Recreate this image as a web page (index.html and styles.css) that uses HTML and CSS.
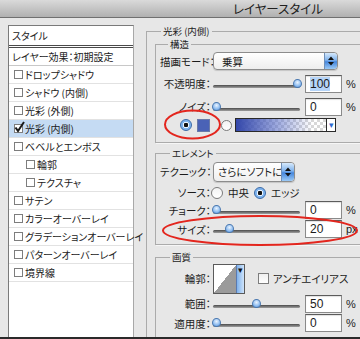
FILE: index.html
```html
<!DOCTYPE html>
<html lang="ja">
<head>
    <meta charset="UTF-8">
    <meta name="viewport" content="width=device-width, initial-scale=1.0">
    <title>レイヤースタイル</title>
    <link rel="stylesheet" href="styles.css">
</head>
<body>
<div class="window">
    <div class="title-bar">レイヤースタイル</div>

    <div class="main">
        <!-- Liste des styles -->
        <ul class="style-list">
            <li class="list-head">スタイル</li>
            <li class="list-default">レイヤー効果：初期設定</li>
            <li class="effect"><span class="check"></span>ドロップシャドウ</li>
            <li class="effect"><span class="check"></span>シャドウ (内側)</li>
            <li class="effect"><span class="check"></span>光彩 (外側)</li>
            <li class="effect selected">
                <span class="check">
                    <svg class="tick" width="11" height="12" viewBox="0 0 11 12"><path d="M1.5 6.5 L4 10 L10 1" fill="none" stroke="#1a1a1a" stroke-width="2"/></svg>
                </span>光彩 (内側)
            </li>
            <li class="effect"><span class="check"></span>ベベルとエンボス</li>
            <li class="effect sub"><span class="check"></span>輪郭</li>
            <li class="effect sub"><span class="check"></span>テクスチャ</li>
            <li class="effect"><span class="check"></span>サテン</li>
            <li class="effect"><span class="check"></span>カラーオーバーレイ</li>
            <li class="effect"><span class="check"></span>グラデーションオーバーレイ</li>
            <li class="effect"><span class="check"></span>パターンオーバーレイ</li>
            <li class="effect"><span class="check"></span>境界線</li>
        </ul>

        <!-- Réglages du style -->
        <section class="panel">
            <div class="group-title">光彩 (内側)</div>

            <div class="group group-structure">
                <div class="group-title">構造</div>
                <div class="field h22">
                    <span class="field-label">描画モード：</span>
                    <div class="select select-blend"><span>乗算</span><span class="stepper"><svg width="12" height="16" viewBox="0 0 12 16"><path d="M3 7 L6 3.5 L9 7Z M3 9 L6 12.5 L9 9Z" fill="#111"/></svg></span></div>
                </div>
                <div class="field h23">
                    <span class="field-label">不透明度：</span>
                    <div class="slider"><span class="thumb" style="left: 80px"></span></div>
                    <div class="num"><span class="num-selected">100</span></div>
                    <span class="unit">%</span>
                </div>
                <div class="field h23">
                    <span class="field-label">ノイズ：</span>
                    <div class="slider"><span class="thumb" style="left: -1px"></span></div>
                    <div class="num">0</div>
                    <span class="unit">%</span>
                </div>
                <div class="field h14">
                    <span class="radio on color-radio"></span>
                    <span class="swatch"></span>
                    <span class="radio off gradient-radio"></span>
                    <span class="gradient"></span>
                    <span class="gradient-btn">▾</span>
                </div>
            </div>

            <div class="group group-element">
                <div class="group-title">エレメント</div>
                <div class="field h25">
                    <span class="field-label">テクニック：</span>
                    <div class="select select-technique"><span class="select-text">さらにソフトに</span><span class="stepper"><svg width="12" height="18" viewBox="0 0 12 18"><path d="M3 8 L6 4.5 L9 8Z M3 10 L6 13.5 L9 10Z" fill="#111"/></svg></span></div>
                </div>
                <div class="field h17">
                    <span class="field-label">ソース：</span>
                    <span class="radio off"></span>
                    <span class="radio-text">中央</span>
                    <span class="radio on source-edge"></span>
                    <span class="radio-text">エッジ</span>
                </div>
                <div class="field h18">
                    <span class="field-label">チョーク：</span>
                    <div class="slider"><span class="thumb" style="left: -1px"></span></div>
                    <div class="num">0</div>
                    <span class="unit">%</span>
                </div>
                <div class="field h20">
                    <span class="field-label">サイズ：</span>
                    <div class="slider"><span class="thumb" style="left: 12px"></span></div>
                    <div class="num">20</div>
                    <span class="unit">px</span>
                </div>
            </div>

            <div class="group group-quality">
                <div class="group-title">画質</div>
                <div class="field h31">
                    <span class="field-label">輪郭：</span>
                    <div class="contour"><span class="contour-curve"></span><span class="contour-btn">▾</span></div>
                    <span class="box"></span>
                    <span class="box-text">アンチエイリアス</span>
                </div>
                <div class="field h19">
                    <span class="field-label">範囲：</span>
                    <div class="slider"><span class="thumb" style="left: 39px"></span></div>
                    <div class="num">50</div>
                    <span class="unit">%</span>
                </div>
                <div class="field h20">
                    <span class="field-label">適用度：</span>
                    <div class="slider"><span class="thumb" style="left: -1px"></span></div>
                    <div class="num">0</div>
                    <span class="unit">%</span>
                </div>
            </div>
        </section>
    </div>

    <!-- Annotations rouges -->
    <svg class="marks" width="360" height="339" viewBox="0 0 360 339">
        <ellipse cx="192.5" cy="124.5" rx="27.5" ry="14" fill="none" stroke="#e3261e" stroke-width="2"/>
        <ellipse cx="260" cy="230.5" rx="97" ry="14.5" fill="none" stroke="#e3261e" stroke-width="2"/>
    </svg>
</div>
</body>
</html>
```

FILE: styles.css
```css
/* Styles généraux */
* {
    box-sizing: border-box;
}
body {
    margin: 0;
    font-family: "Noto Sans CJK JP", sans-serif;
    font-size: 10.5px;
    color: #1b1b1b;
    font-feature-settings: "palt";
}
.window {
    position: relative;
    width: 360px;
    height: 339px;
    overflow: hidden;
    background-color: #e7e7e7;
    border-bottom: 2px solid #2a2a2a;
}
.title-bar {
    height: 18px;
    padding-left: 233px;
    border-bottom: 1px solid #707070;
    background: linear-gradient(#dadada, #b0b0b0);
    font-size: 12.5px;
    line-height: 17px;
    color: #202020;
}
.main {
    display: flex;
    align-items: flex-start;
    padding: 7px 0 0 8px;
}

/* Liste des styles */
.style-list {
    flex: none;
    width: 126px;
    height: 330px;
    margin: 0;
    padding: 0;
    list-style: none;
    background-color: #fff;
    border: 1px solid #7a7a7a;
    border-right-color: #a8a8a8;
    font-size: 10px;
    white-space: nowrap;
}
.list-head {
    height: 22px;
    line-height: 19px;
    padding-left: 3px;
    border-bottom: 3px double #4a4a4a;
}
.list-default {
    height: 18px;
    line-height: 17px;
    padding-left: 3px;
    border-bottom: 1px solid #c8c8c8;
}
.effect {
    display: flex;
    align-items: center;
    height: 18px;
    padding-left: 5px;
    border-bottom: 1px solid #e2e2e2;
}
.effect.sub {
    padding-left: 17px;
}
.effect.selected {
    background-color: #c5dbf3;
}
.check {
    position: relative;
    flex: none;
    width: 9px;
    height: 9px;
    margin-right: 2px;
    border: 1px solid #7d7d7d;
    background-color: #fff;
}
.tick {
    position: absolute;
    left: -1px;
    top: -4px;
}

/* Panneau des réglages */
.panel {
    flex: none;
    width: 230px;
    height: 330px;
    margin: 6px 0 0 12px;
    padding: 0 0 0 8px;
    border: 1px solid #ababab;
    box-shadow: 1px 1px 0 #f6f6f6;
}
.group-title {
    display: table;
    margin: -7px 0 0 6px;
    padding: 0 2px;
    font-size: 9.5px;
    line-height: 12px;
    background-color: #e7e7e7;
    white-space: nowrap;
}
.group {
    padding: 0 0 0 4px;
    border: 1px solid #ababab;
    box-shadow: 1px 1px 0 #f6f6f6;
}
.group .group-title {
    margin-left: 8px;
}
.group-structure {
    margin-top: 7px;
    padding-bottom: 10px;
}
.group-element {
    margin-top: 10px;
    padding-bottom: 5px;
}
.group-element .group-title,
.group-quality .group-title {
    margin-left: 10px;
}
.group-quality {
    margin-top: 12px;
    padding-bottom: 20px;
}
.field {
    display: flex;
    align-items: center;
    white-space: nowrap;
}
.h14 { height: 14px; }
.h17 { height: 17px; }
.h18 { height: 18px; }
.h19 { height: 19px; }
.h20 { height: 20px; }
.h22 { height: 22px; }
.h23 { height: 23px; }
.h25 { height: 25px; }
.h31 { height: 31px; }
.field-label {
    flex: none;
    width: 51px;
    text-align: right;
}

/* Menus déroulants */
.select {
    display: flex;
    align-items: center;
    flex: none;
    margin-left: 2px;
    padding-left: 8px;
    border: 1px solid #8c8c8c;
    border-radius: 4px;
    background: linear-gradient(#fff, #eeeeee);
    box-shadow: 0 1px 1px rgba(0, 0, 0, 0.15);
    overflow: hidden;
}
.select-blend {
    width: 125px;
    height: 18px;
}
.select-technique {
    width: 82px;
    height: 20px;
    padding-left: 4px;
}
.select-text {
    overflow: hidden;
}
.stepper {
    display: flex;
    flex: none;
    margin-left: auto;
    border-left: 1px solid #6f8fb8;
    border-radius: 0 3px 3px 0;
    background: linear-gradient(#d6e9fc, #7fb2ec 45%, #4586dc 55%, #9ccaf6);
}

/* Curseurs et champs */
.slider {
    position: relative;
    flex: none;
    width: 87px;
    height: 12px;
    margin-left: 2px;
}
.slider::before {
    content: "";
    position: absolute;
    left: 0;
    right: 0;
    top: 7px;
    height: 3px;
    border-radius: 2px;
    background: linear-gradient(#4a4a4a, #a0a0a0);
}
.thumb {
    position: absolute;
    top: 1px;
    width: 9px;
    height: 9px;
    border: 1px solid #4a78b0;
    border-radius: 50% 50% 50% 50% / 55% 55% 45% 45%;
    background: radial-gradient(circle at 50% 35%, #eaf4ff, #8fbdf0 60%, #5b93d8);
}
.num {
    flex: none;
    width: 37px;
    height: 18px;
    margin-left: 5px;
    padding-left: 4px;
    border: 1px solid #8a8a8a;
    border-top-color: #5c5c5c;
    background-color: #fff;
    box-shadow: inset 0 1px 1px rgba(0, 0, 0, 0.12);
    font-family: "Liberation Sans", sans-serif;
    font-size: 12px;
    line-height: 16px;
}
.num-selected {
    background-color: #b5d4f8;
}
.unit {
    margin-left: 4px;
    font-family: "Liberation Sans", sans-serif;
    font-size: 11px;
}

/* Boutons radio */
.radio {
    flex: none;
    width: 12px;
    height: 12px;
    border-radius: 50%;
}
.radio.off {
    border: 1px solid #7b7b7b;
    background: linear-gradient(#f2f2f2, #fff);
}
.radio.on {
    border: 1px solid #3a6aa8;
    background: radial-gradient(circle, #111 0 2px, #e8f3ff 2.5px 3px, #7fb4ee 3.5px);
}
.radio-text {
    margin-left: 5px;
}
.source-edge {
    margin-left: 5px;
}
.color-radio {
    margin-left: 20px;
}
.swatch {
    flex: none;
    width: 13px;
    height: 13px;
    margin-left: 5px;
    border: 1px solid #6a7aa8;
    background-color: #4a62b6;
}
.gradient-radio {
    width: 11px;
    height: 11px;
    margin-left: 11px;
}
.gradient {
    flex: none;
    width: 92px;
    height: 14px;
    margin-left: 3px;
    border: 1px solid #2a2a2a;
    background:
        linear-gradient(to right, #3347aa, rgba(90, 110, 200, 0.6) 45%, rgba(255, 255, 255, 0) 85%),
        repeating-conic-gradient(#d8d8d8 0 25%, #fff 0 50%) 0 0 / 6px 6px;
}
.gradient-btn {
    flex: none;
    width: 9px;
    height: 14px;
    border: 1px solid #2a2a2a;
    border-left: none;
    background-color: #fff;
    color: #2f6ad0;
    font-size: 9px;
    line-height: 12px;
    text-align: center;
}

/* Contour et case à cocher */
.contour {
    display: flex;
    flex: none;
    width: 32px;
    height: 30px;
    margin-left: 2px;
    border: 1px solid #5a5a5a;
}
.contour-curve {
    flex: 1;
    background: linear-gradient(to top left, #9b9b9b 50%, #fff 50%);
}
.contour-btn {
    width: 8px;
    border-left: 1px solid #5a7ab0;
    background: linear-gradient(to right, #7fb2ec, #cfe4fb);
    color: #111;
    font-size: 9px;
    line-height: 10px;
    text-align: center;
}
.box {
    flex: none;
    width: 11px;
    height: 11px;
    margin-left: 13px;
    border: 1px solid #7d7d7d;
    background: linear-gradient(#f0f0f0, #fff);
}
.box-text {
    margin-left: 4px;
}

/* Annotations */
.marks {
    position: absolute;
    left: 0;
    top: 0;
    pointer-events: none;
}
```
